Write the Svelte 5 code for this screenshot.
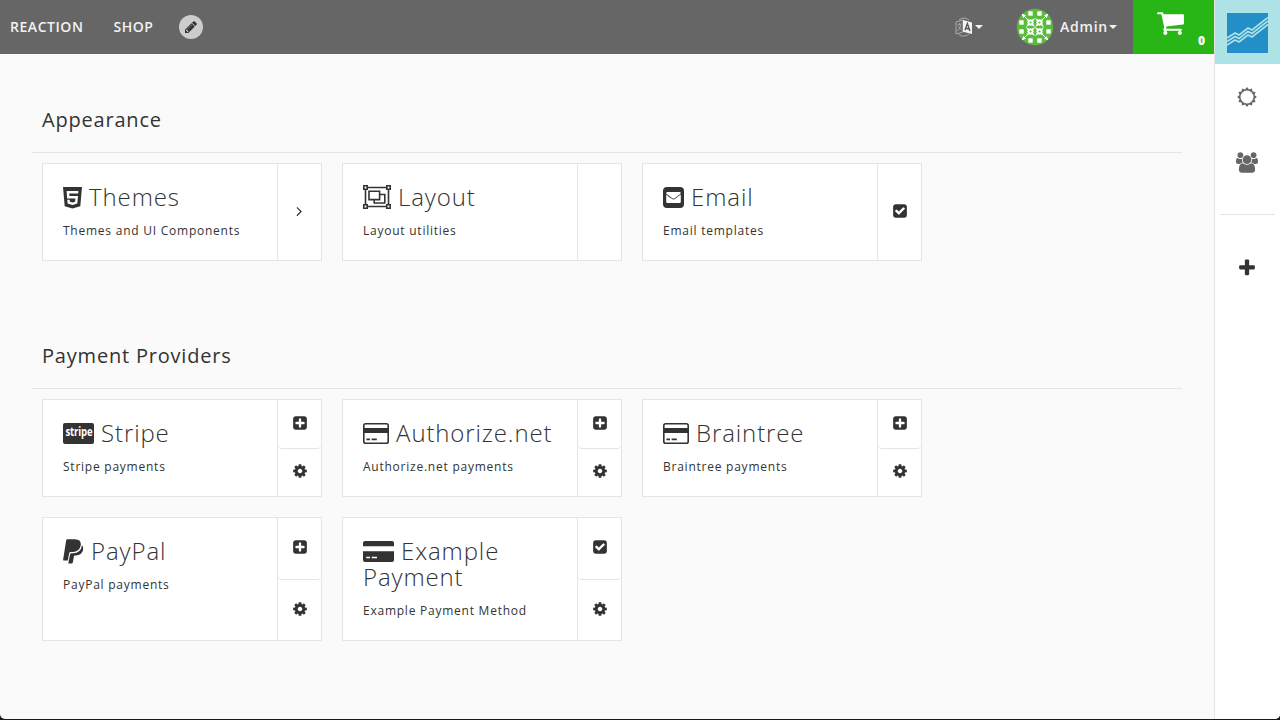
<script>
  const appearance = [
    { icon: 'html5', title: 'Themes', text: 'Themes and UI Components', actions: ['angle'] },
    { icon: 'group', title: 'Layout', text: 'Layout utilities', actions: [] },
    { icon: 'mail', title: 'Email', text: 'Email templates', actions: ['check'] },
  ];
  const payments = [
    { icon: 'stripe', title: 'Stripe', text: 'Stripe payments', actions: ['plusSquare', 'cog'] },
    { icon: 'card', title: 'Authorize.net', text: 'Authorize.net payments', actions: ['plusSquare', 'cog'] },
    { icon: 'card', title: 'Braintree', text: 'Braintree payments', actions: ['plusSquare', 'cog'] },
    { icon: 'paypal', title: 'PayPal', text: 'PayPal payments', actions: ['plusSquare', 'cog'] },
    { icon: 'cardSolid', title: 'Example Payment', text: 'Example Payment Method', actions: ['check', 'cog'] },
  ];
  const sections = [
    { title: 'Appearance', cards: appearance },
    { title: 'Payment Providers', cards: payments },
  ];

  const glyphs = {
    cog: 'M1152 896q0-106-75-181t-181-75-181 75-75 181 75 181 181 75 181-75 75-181zm512-109v222q0 12-8 23t-20 13l-185 28q-19 54-39 91 35 50 107 138 10 12 10 25t-9 23q-27 37-99 108t-94 71q-12 0-26-9l-138-108q-44 23-91 38-16 136-29 186-7 28-36 28h-222q-14 0-24.5-8.5t-11.5-21.5l-28-184q-49-16-90-37l-141 107q-10 9-25 9-14 0-25-11-126-114-165-168-7-10-7-23 0-12 8-23 15-21 51-66.5t54-70.5q-27-50-41-99l-183-27q-13-2-21-12.5t-8-23.5v-222q0-12 8-23t19-13l186-28q14-46 39-92-40-57-107-138-10-12-10-24 0-10 9-23 26-36 98.5-107.5t94.5-71.5q13 0 26 10l138 107q44-23 91-38 16-136 29-186 7-28 36-28h222q14 0 24.5 8.5t11.5 21.5l28 184q49 16 90 37l142-107q9-9 24-9 13 0 25 10 129 119 165 170 7 8 7 22 0 12-8 23-15 21-51 66.5t-54 70.5q26 50 41 98l183 28q13 2 21 12.5t8 23.5z',
    plusSquare: 'M1408 960v-128q0-26-19-45t-45-19h-320v-320q0-26-19-45t-45-19h-128q-26 0-45 19t-19 45v320h-320q-26 0-45 19t-19 45v128q0 26 19 45t45 19h320v320q0 26 19 45t45 19h128q26 0 45-19t19-45v-320h320q26 0 45-19t19-45zm256-544v960q0 119-84.5 203.5t-203.5 84.5h-960q-119 0-203.5-84.5t-84.5-203.5v-960q0-119 84.5-203.5t203.5-84.5h960q119 0 203.5 84.5t84.5 203.5z',
    check: 'M813 1299l614-614q19-19 19-45t-19-45l-102-102q-19-19-45-19t-45 19l-467 467-211-211q-19-19-45-19t-45 19l-102 102q-19 19-19 45t19 45l358 358q19 19 45 19t45-19zm851-883v960q0 119-84.5 203.5t-203.5 84.5h-960q-119 0-203.5-84.5t-84.5-203.5v-960q0-119 84.5-203.5t203.5-84.5h960q119 0 203.5 84.5t84.5 203.5z',
    angle: 'M1099 960q0 13-10 23l-466 466q-10 10-23 10t-23-10l-50-50q-10-10-10-23t10-23l393-393-393-393q-10-10-10-23t10-23l50-50q10-10 23-10t23 10l466 466q10 10 10 23z',
    plus: 'M1600 736v192q0 40-28 68t-68 28h-416v416q0 40-28 68t-68 28h-192q-40 0-68-28t-28-68v-416h-416q-40 0-68-28t-28-68v-192q0-40 28-68t68-28h416v-416q0-40 28-68t68-28h192q40 0 68 28t28 68v416h416q40 0 68 28t28 68z',
    cart: 'M704 1536q0 52-38 90t-90 38-90-38-38-90 38-90 90-38 90 38 38 90zm896 0q0 52-38 90t-90 38-90-38-38-90 38-90 90-38 90 38 38 90zm128-1088v512q0 24-16.5 42.5t-40.5 21.5l-1044 122q13 60 13 70 0 16-24 64h920q26 0 45 19t19 45-19 45-45 19h-1024q-26 0-45-19t-19-45q0-11 8-31.5t16-36 21.5-40 15.5-29.5l-177-823h-204q-26 0-45-19t-19-45 19-45 45-19h256q16 0 28.5 6.5t19.5 15.5 13 24.5 8 26 5.5 29.5 4.5 26h1201q26 0 45 19t19 45z',
    pencil: 'M491 1536l91-91-235-235-91 91v107h128v128h107zm523-928q0-22-22-22-10 0-17 7l-542 542q-7 7-7 17 0 22 22 22 10 0 17-7l542-542q7-7 7-17zm-54-192l416 416-832 832h-416v-416zm683 96q0 53-37 90l-166 166-416-416 166-165q36-38 90-38 53 0 91 38l235 234q37 39 37 91z',
    users: 'M657 896q-162 5-265 128h-134q-82 0-138-40.5t-56-118.5q0-353 124-353 6 0 43.5 21t97.5 42.5 119 21.5q67 0 133-23-5 37-5 66 0 139 81 256zm1071 637q0 120-73 189.5t-194 69.5h-874q-121 0-194-69.5t-73-189.5q0-53 3.5-103.5t14-109 26.5-108.5 43-97.5 62-81 85.5-53.5 111.5-20q10 0 43 21.5t73 48 107 48 135 21.5 135-21.5 107-48 73-48 43-21.5q61 0 111.5 20t85.5 53.5 62 81 43 97.5 26.5 108.5 14 109 3.5 103.5zm-1024-1277q0 106-75 181t-181 75-181-75-75-181 75-181 181-75 181 75 75 181zm704 384q0 159-112.5 271.5t-271.5 112.5-271.5-112.5-112.5-271.5 112.5-271.5 271.5-112.5 271.5 112.5 112.5 271.5zm576 225q0 78-56 118.5t-138 40.5h-134q-103-123-265-128 81-117 81-256 0-29-5-66 66 23 133 23 59 0 119-21.5t97.5-42.5 43.5-21q124 0 124 353zm-128-609q0 106-75 181t-181 75-181-75-75-181 75-181 181-75 181 75 75 181z',
  };

  const sunPoints = Array.from({ length: 24 }, (_, i) => {
    const r = i % 2 ? 7.7 : 9.9;
    const a = (i * Math.PI) / 12;
    return `${(10 + r * Math.sin(a)).toFixed(2)} ${(10 - r * Math.cos(a)).toFixed(2)}`;
  });
  const sunPath = `M${sunPoints.join('L')}Z M10 3.5a6.5 6.5 0 1 0 0 13a6.5 6.5 0 1 0 0-13Z`;

  const edgeTiles = [[9, 0], [18, 0], [0, 9], [0, 18], [27, 9], [27, 18], [9, 27], [18, 27]];
  const starTiles = [[9, 9], [18, 9], [9, 18], [18, 18]];
</script>

{#snippet glyph(name, size)}
  <svg width={size} height={size} viewBox="0 0 1792 1792" fill="currentColor"><path d={glyphs[name]} /></svg>
{/snippet}

{#snippet logo(name)}
  {#if name === 'html5'}
    <svg class="logo mid" width="19" height="22" viewBox="0 0 19 22"><path fill="currentColor" fill-rule="evenodd" d="M0 0H19L17.3 19.2L9.5 21.6L1.7 19.2Z M3.6 4L4.2 11.4H12.4L12.1 14.7L9.5 15.5L6.9 14.7L6.7 12.8H4.3L4.6 16.6L9.5 18L14.3 16.6L15 9.1H6.4L6.2 6.4H15.2L15.4 4Z" /></svg>
  {:else if name === 'group'}
    <svg class="logo mid" width="28" height="24" viewBox="0 0 28 24" fill="none" stroke="currentColor" stroke-width="1.6"><path d="M4.5 2.5H23.5M4.5 21.5H23.5M2.5 4.5V19.5M25.5 4.5V19.5M.8 .8H4.2V4.2H.8ZM23.8 .8H27.2V4.2H23.8ZM.8 19.8H4.2V23.2H.8ZM23.8 19.8H27.2V23.2H23.8ZM6 6.2H16.6V14.6H6ZM16.6 9.5H21.8V18H11.2V14.6" /></svg>
  {:else if name === 'mail'}
    <svg class="logo" width="21" height="21" viewBox="0 0 21 21"><rect width="21" height="21" rx="4" fill="currentColor" /><path fill="#fff" d="M3.2 7.4Q6 10 8.8 11.8Q10.5 13 12.2 11.8L17.8 7.4V14.8Q17.8 16 16.5 16H4.5Q3.2 16 3.2 14.8ZM4.5 5H16.5Q17.8 5 17.8 6Q17.6 6.9 16.6 7.6L12 11Q10.5 12.1 9 11L4.4 7.6Q3.2 6.9 3.2 6Q3.2 5 4.5 5Z" /></svg>
  {:else if name === 'stripe'}
    <span class="stripe"><span>stripe</span></span>
  {:else if name === 'card'}
    <svg class="logo" width="26" height="21" viewBox="0 0 26 21"><rect x=".8" y=".8" width="24.4" height="19.4" rx="1.8" fill="none" stroke="currentColor" stroke-width="1.6" /><path fill="currentColor" d="M1 5H25V10H1ZM3.4 15.6H7V17.3H3.4ZM8.6 15.6H13.8V17.3H8.6Z" /></svg>
  {:else if name === 'cardSolid'}
    <svg class="logo" width="31" height="21" viewBox="0 0 31 21"><path fill="currentColor" fill-rule="evenodd" d="M0 5.2V2Q0 0 2 0H29Q31 0 31 2V5.2ZM0 10.3H31V19Q31 21 29 21H2Q0 21 0 19ZM3.2 15.7V17.3H7V15.7ZM8.7 15.7V17.3H14V15.7Z" /></svg>
  {:else if name === 'paypal'}
    <svg class="logo low" width="21" height="25" viewBox="0 0 21 25" fill="currentColor"><path d="M3.2 1.2Q3.4 .2 4.4 .2H11.8Q18.5 .2 17.8 6.3Q16.5 13 9.6 13.1H7.5Q6.5 13.1 6.2 14.2L4.8 21.5H.6Q0 21.5 .1 20.8Z" /><path d="M19 6.2Q21 7.9 20.1 11.1Q18.7 16.3 13 16.5H12Q11.1 16.5 10.9 17.4L9.8 23.4Q9.6 24.5 8.6 24.5H6Q5.2 24.5 5.4 23.6L7.2 15Q7.4 14.3 8.2 14.3H10Q17.9 14.1 19 6.2Z" /></svg>
  {/if}
{/snippet}

<div class="app">
  <div class="workspace">
    <header>
      <nav>
        <span>REACTION</span>
        <span>SHOP</span>
        <button class="edit" aria-label="Edit">{@render glyph('pencil', 14)}</button>
      </nav>
      <div class="tools">
        <div class="language">
          <svg width="18" height="20" viewBox="0 0 18 20"><path fill="none" stroke="#bdbdbd" stroke-width=".8" d="M1 5L8 3V15L1 17ZM2.5 8L6.5 7M4.3 6V7.5M5.8 8Q5 12 2.3 14M3 9.5L6.6 13M4 3Q9-1 14 3M4 17.5Q9 21 14 17" /><path fill="#f2f2f2" d="M8 3L17 5.4V17L8 14.8Z" /><path fill="none" stroke="#555" stroke-width="1.4" d="M10 13.3L12.4 6.5L15 14M10.8 11.2L14.2 12" /></svg>
          <i class="caret"></i>
        </div>
        <div class="account">
          <svg class="avatar" width="38" height="38" viewBox="-1 -1 38 38">
            <defs><clipPath id="round"><circle cx="18" cy="18" r="18" /></clipPath></defs>
            <circle cx="18" cy="18" r="18.7" fill="#737070" />
            <g clip-path="url(#round)">
              <rect width="36" height="36" fill="#58bd3c" />
              {#each edgeTiles as [x, y]}
                <rect x={x + 2.3} y={y + 2.3} width="4.4" height="4.4" fill="#fff" />
              {/each}
              {#each starTiles as [x, y]}
                <path transform="translate({x} {y})" fill="#fff" d="M0 0L3.2 1.8L4.5 1.2L5.8 1.8L9 0L7.2 3.2L7.8 4.5L7.2 5.8L9 9L5.8 7.2L4.5 7.8L3.2 7.2L0 9L1.8 5.8L1.2 4.5L1.8 3.2Z" />
                <circle cx={x + 4.5} cy={y + 4.5} r="1.1" fill="#58bd3c" />
              {/each}
              <path fill="#fff" d="M4 4L9 6.5L7.5 7.5L6.5 9ZM32 4L27 6.5L28.5 7.5L29.5 9ZM4 32L9 29.5L7.5 28.5L6.5 27ZM32 32L27 29.5L28.5 28.5L29.5 27Z" />
              <path stroke="#fff" stroke-width=".9" d="M5 5L10 10M31 5L26 10M5 31L10 26M31 31L26 26" />
            </g>
          </svg>
          <span>Admin</span><i class="caret"></i>
        </div>
        <div class="cart">{@render glyph('cart', 29)}<b>0</b></div>
      </div>
    </header>
    <main>
      {#each sections as section}
        <section>
          <h3>{section.title}</h3>
          <div class="cards">
            {#each section.cards as card}
              <article>
                <div class="body">
                  <h2>{@render logo(card.icon)} {card.title}</h2>
                  <p>{card.text}</p>
                </div>
                <div class="actions">
                  {#each card.actions as action}
                    <div class="action">{@render glyph(action, 16)}</div>
                  {/each}
                </div>
              </article>
            {/each}
          </div>
        </section>
      {/each}
    </main>
  </div>
  <aside>
    <div class="brand">
      <svg width="41" height="40" viewBox="0 0 41 40"><rect width="41" height="40" fill="#248ec6" /><path fill="none" stroke="#ade2e6" stroke-width="1.6" d="M0 25L8 20L12 22L21 15L25 17L41 4.5M0 28.5L8 23.5L12 25.5L21 18.5L25 20.5L41 8M0 32L8 27L12 29L21 22L25 24L41 11.5" /></svg>
    </div>
    <div class="side"><svg width="20" height="20" viewBox="0 0 20 20"><path fill="currentColor" fill-rule="evenodd" d={sunPath} /></svg></div>
    <div class="side people"><svg width="22" height="21" viewBox="64 0 1920 1792" fill="currentColor"><path d={glyphs.users} /></svg></div>
    <hr />
    <div class="side dark">{@render glyph('plus', 20)}</div>
  </aside>
</div>

<style>
  :global(body) { margin: 0; background: #151c1e; }
  * { box-sizing: border-box; }
  svg { display: block; flex: none; }
  .app { display: flex; width: 1280px; height: 719px; margin-bottom: 1px; overflow: hidden; border-radius: 0 0 5px 5px; background: #fafafa; color: #333; font-family: "Open Sans", "Noto Sans", sans-serif; }
  .workspace { width: 1214px; }
  header { display: flex; justify-content: space-between; height: 54px; background: #666; color: #f2f2f2; font-size: 14px; font-weight: 600; letter-spacing: .55px; }
  nav { display: flex; align-items: center; gap: 30px; padding-left: 10px; }
  nav span, .account span { padding-bottom: 2px; }
  .edit { display: grid; place-items: center; width: 24px; height: 24px; margin-left: -5px; padding: 0; border: 0; border-radius: 50%; background: #ccc; color: #333; }
  .tools, .language, .account { display: flex; align-items: center; }
  .language { gap: 2px; margin-right: 33px; }
  .account span { margin: 0 1px 0 6px; letter-spacing: .75px; }
  .caret { border: 4px solid transparent; border-top-color: #f2f2f2; border-bottom: 0; }
  .cart { display: flex; justify-content: space-between; width: 81px; height: 54px; margin-left: 16px; padding: 8px 9px 0 23px; background: #28b516; color: #fff; }
  .cart b { align-self: flex-end; font-size: 12px; line-height: 27px; font-weight: 800; letter-spacing: 0; }
  main { padding: 46px 32px 0; }
  section { margin-bottom: 75px; }
  h3 { height: 53px; margin: 0; padding: 4px 10px 0; border-bottom: 1px solid #e5e5e5; font-size: 20px; font-weight: 400; line-height: 32px; letter-spacing: .8px; }
  .cards { display: flex; flex-wrap: wrap; gap: 20px; width: 920px; padding: 10px 10px 0; }
  article { display: flex; width: 280px; border: 1px solid #e5e5e5; background: #fff; }
  .body { flex: 1; padding: 20px; }
  h2 { margin: 0; font-size: 24px; font-weight: 300; line-height: 26px; letter-spacing: .87px; }
  p { margin: 12px 0 0; font-size: 12px; line-height: 18px; letter-spacing: .76px; }
  .logo { display: inline-block; vertical-align: -2px; }
  .mid { vertical-align: -3px; }
  .low { vertical-align: -4px; }
  .stripe { display: inline-flex; justify-content: center; width: 31px; height: 21px; margin-top: 3px; border-radius: 2px; background: #333; color: #fff; font-size: 12px; font-weight: 700; line-height: 18px; letter-spacing: -.2px; vertical-align: top; }
  .stripe span { transform: scaleX(.8); }
  .actions { display: flex; flex-direction: column; width: 44px; border-left: 1px solid #e5e5e5; }
  .action { display: grid; flex: 1; place-items: center; padding-bottom: 2px; }
  .action:not(:last-child) { border-bottom: 1px solid #e5e5e5; border-radius: 0 0 4px 4px; }
  aside { width: 66px; border-left: 1px solid #e5e5e5; background: #fff; color: #666; }
  .brand { display: grid; place-items: center; height: 64px; padding-top: 2px; background: #ade2e6; }
  .side { display: grid; place-items: center; width: 64px; height: 66px; }
  .people { padding-bottom: 2px; }
  aside hr { width: 55px; height: 1px; margin: 18px 5px 20px; border: 0; background: #e5e5e5; }
  .dark { color: #333; }
</style>
